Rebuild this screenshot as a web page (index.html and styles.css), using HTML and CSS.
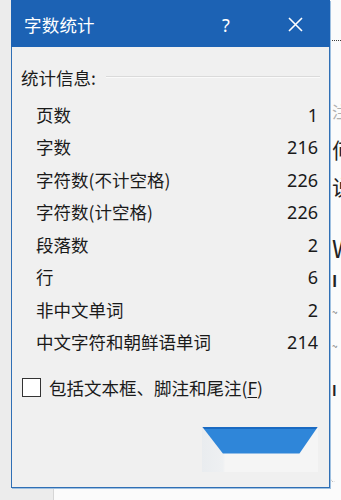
FILE: index.html
```html
<!DOCTYPE html>
<html lang="zh-CN">
<head>
<meta charset="utf-8">
<title>字数统计</title>
<link rel="stylesheet" href="styles.css">
</head>
<body>
<div class="app">
  <div class="sidebar"></div>
  <div class="doc">
    <div class="ruler"></div>
    <div class="textbox">
      <div class="dline l1">注</div>
      <div class="dline l2">何</div>
      <div class="dline l3">说</div>
      <div class="dline l4">W</div>
      <div class="dline l5">I</div>
      <div class="dline l6">~</div>
      <div class="dline l7">~</div>
      <div class="dline l8">I</div>
    </div>
  </div>

  <div class="dialog">
    <div class="titlebar">
      <span class="title">字数统计</span>
      <span class="help">?</span>
      <span class="close">
        <svg width="15" height="15" viewBox="0 0 15 15"><path d="M1 1 L14 14 M14 1 L1 14" stroke="#fff" stroke-width="1.6" fill="none"/></svg>
      </span>
    </div>
    <div class="body">
      <div class="group-head">
        <span>统计信息:</span>
        <span class="sep"></span>
      </div>
      <div class="rows">
        <div class="row"><span>页数</span><span>1</span></div>
        <div class="row"><span>字数</span><span>216</span></div>
        <div class="row"><span>字符数(不计空格)</span><span>226</span></div>
        <div class="row"><span>字符数(计空格)</span><span>226</span></div>
        <div class="row"><span>段落数</span><span>2</span></div>
        <div class="row"><span>行</span><span>6</span></div>
        <div class="row"><span>非中文单词</span><span>2</span></div>
        <div class="row"><span>中文字符和朝鲜语单词</span><span>214</span></div>
      </div>
      <label class="check">
        <span class="box"></span>
        <span>包括文本框、脚注和尾注(<u>F</u>)</span>
      </label>
      <div class="btn-area">
        <div class="btn"></div>
      </div>
    </div>
  </div>
</div>
</body>
</html>
```

FILE: styles.css
```css
html, body {
  margin: 0;
  padding: 0;
}
body {
  width: 341px;
  height: 500px;
  overflow: hidden;
  background: #fbfbfb;
  font-family: "Noto Sans CJK SC", "Noto Sans", sans-serif;
}
.app {
  position: relative;
  display: flex;
  width: 341px;
  height: 500px;
}
.sidebar {
  width: 57px;
  height: 500px;
  background: #ececec;
  border-right: 1px solid #d6d6d6;
}
.doc {
  flex: 1;
  position: relative;
  background: #fbfbfb;
  display: flex;
}
.ruler {
  width: 2px;
  height: 40px;
  margin-left: 273px;
  background: #e2e2e2;
}
.textbox {
  margin-top: 40px;
  margin-left: 0;
  height: 442px;
  width: 12px;
  border-left: 1px dotted #3a3a3a;
  border-top: 1px dotted #3a3a3a;
  border-bottom-left-radius: 6px;
  overflow: hidden;
  display: flex;
  flex-direction: column;
  padding-left: 2px;
  box-sizing: border-box;
}
.dline {
  font-size: 21px;
  line-height: 24px;
  color: #222;
  white-space: nowrap;
}
.l1 { margin-top: 58px; color: #b0b0b0; font-size: 16px; }
.l2 { margin-top: 14px; }
.l3 { margin-top: 13px; }
.l4 { margin-top: 38px; font-size: 24px; }
.l5 { margin-top: 8px; font-weight: bold; font-size: 16px; }
.l6 { margin-top: 8px; font-size: 10px; color: #777; }
.l7 { margin-top: 10px; font-size: 10px; color: #777; }
.l8 { margin-top: 20px; font-weight: bold; font-size: 14px; }

.dialog {
  position: absolute;
  left: 11px;
  top: 0;
  width: 319px;
  height: 488px;
  box-sizing: border-box;
  border: 1px solid #2f6fb5;
  border-top: none;
  background: #f0f0f0;
  display: flex;
  flex-direction: column;
  box-shadow: 1px 1px 0 #9fc0e0;
}
.titlebar {
  height: 47px;
  background: #1c62b4;
  display: flex;
  align-items: center;
  color: #fff;
  padding-left: 13px;
  padding-top: 3px;
  box-sizing: border-box;
  margin: 0 -1px;
}
.title {
  flex: 1;
  font-size: 17.5px;
  line-height: 24px;
  letter-spacing: 0.2px;
}
.help {
  width: 40px;
  text-align: center;
  font-size: 18px;
  line-height: 24px;
  font-family: "Noto Sans", sans-serif;
  margin-right: 26px;
}
.close {
  width: 46px;
  display: flex;
  justify-content: center;
  margin-right: 12px;
  margin-top: -1px;
}
.body {
  flex: 1;
  display: flex;
  flex-direction: column;
  padding: 19px 11px 0 9px;
  color: #1a1a1a;
  font-size: 17.5px;
}
.group-head {
  display: flex;
  align-items: center;
  height: 24px;
  line-height: 24px;
  gap: 10px;
}
.sep {
  flex: 1;
  height: 1px;
  background: #dadada;
  border-bottom: 1px solid #fafafa;
  margin-top: -2px;
  margin-right: -2px;
}
.rows {
  margin-top: 8.5px;
  display: flex;
  flex-direction: column;
}
.row {
  height: 32.5px;
  line-height: 32.5px;
  display: flex;
  justify-content: space-between;
  padding-left: 15px;
}
.row span:last-child {
  font-family: "Noto Sans", sans-serif;
  font-size: 18px;
}
.check {
  margin-top: 17px;
  display: flex;
  align-items: center;
  height: 24px;
  line-height: 24px;
  gap: 8px;
  padding-left: 1px;
}
.box {
  width: 17px;
  height: 17px;
  border: 1px solid #333;
  background: #fff;
  flex: none;
}
.check u {
  text-decoration-thickness: 1px;
  text-underline-offset: 2px;
}
.btn-area {
  margin-top: 27px;
  align-self: flex-end;
  width: 116px;
  height: 45px;
  background: linear-gradient(90deg, #e9ecef 0, #eef0f2 18%, #f5f5f5 20%, #f5f5f5 100%);
}
.btn {
  height: 27px;
  background: linear-gradient(#1a6ac2 0, #1a6ac2 2px, #2f86d9 2px, #2f86d9 100%);
  clip-path: polygon(0 0, 100% 0, 84% 100%, 18% 100%);
}
```
